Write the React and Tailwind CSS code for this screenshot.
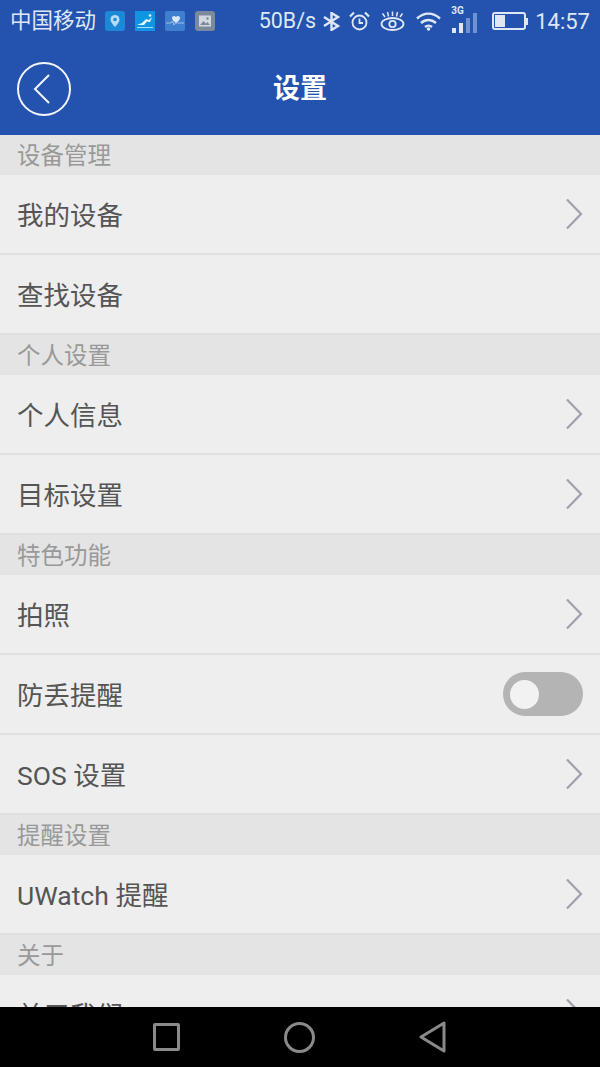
const FONT = "font-['Roboto','Noto_Sans_CJK_SC',sans-serif]"

const SECTIONS = [
  { title: '设备管理', rows: [{ label: '我的设备', arrow: true }, { label: '查找设备' }] },
  { title: '个人设置', rows: [{ label: '个人信息', arrow: true }, { label: '目标设置', arrow: true }] },
  {
    title: '特色功能',
    rows: [
      { label: '拍照', arrow: true },
      { label: '防丢提醒', toggle: true },
      { label: 'SOS 设置', arrow: true },
    ],
  },
  { title: '提醒设置', rows: [{ label: 'UWatch 提醒', arrow: true }] },
  { title: '关于', rows: [{ label: '关于我们', arrow: true }] },
]

function NotifyIcons() {
  return (
    <div className="flex items-center gap-[10px] ml-[9px]">
      <svg width="20" height="20" viewBox="0 0 20 20">
        <rect width="20" height="20" rx="3" fill="#1e88d8" />
        <path d="M10 16c-3-3.500-4.500-5.500-4.500-7.500a4.500 4.500 0 0 1 9 0C14.500 10.500 13 12.500 10 16z" fill="#b6dcf5" />
        <circle cx="10" cy="8.500" r="1.800" fill="#1e88d8" />
      </svg>
      <svg width="20" height="20" viewBox="0 0 20 20">
        <rect width="20" height="20" fill="#0f96e3" />
        <path d="M2 14l5-2 4-4 3 1 3-3-2 5-3-.5-3 3.500z" fill="#e8f6fd" />
        <circle cx="15" cy="4.500" r="1.300" fill="#e8f6fd" />
        <rect x="2" y="16" width="16" height="1" fill="#a8dcf7" />
      </svg>
      <svg width="20" height="20" viewBox="0 0 20 20">
        <rect width="20" height="20" rx="2" fill="#3f7fd0" />
        <path d="M11 12C8 10 7 8.500 7 6.800 7 5 9.500 4 11 6c1.500-2 4-1 4 .8C15 8.500 14 10 11 12z" fill="#dbe8f6" />
        <path d="M1 12h5l1.500-2 1.500 4 1.500-2H19" stroke="#a9c8ea" strokeWidth="0.900" fill="none" />
      </svg>
      <svg width="20" height="20" viewBox="0 0 20 20">
        <rect width="20" height="20" rx="3" fill="#7d8a9b" />
        <rect x="4" y="4.500" width="12" height="11" fill="#d3d8de" />
        <path d="M5 14l3.500-4 2.500 2.500 1.500-1.500 2.500 3z" fill="#7d8a9b" />
        <circle cx="12.500" cy="7.500" r="1.200" fill="#7d8a9b" />
      </svg>
    </div>
  )
}

function StatusIcons() {
  return (
    <div className="flex items-center">
      <svg width="19" height="19" viewBox="0 0 19 19" className="ml-[6px]" fill="none" stroke="#dfe7f5" strokeWidth="2.400">
        <path d="M2 5l14 9-6.500 4V1L16 5 2 14" />
      </svg>
      <svg width="21" height="20" viewBox="0 0 21 20" className="ml-[8px]" fill="none" stroke="#dfe7f5" strokeWidth="1.800">
        <circle cx="10.500" cy="11.500" r="7" />
        <path d="M10.500 7.500v4.500h3.500" />
        <path d="M1 5.500l4-4M20 5.500l-4-4" strokeWidth="2.200" />
      </svg>
      <svg width="27" height="20" viewBox="0 0 27 20" className="ml-[9px]" fill="none" stroke="#dfe7f5" strokeWidth="1.800">
        <ellipse cx="13.500" cy="13" rx="11" ry="6" />
        <circle cx="13.500" cy="13" r="3.200" />
        <path d="M6 6L3.500 2.500M13.500 5V.5M21 6l2.500-3.500M9.500 5.500L8.500 1M17.500 5.500L18.500 1" strokeWidth="1.500" />
      </svg>
      <svg width="27" height="20" viewBox="0 0 27 20" className="ml-[9px]" fill="none" stroke="#dfe7f5" strokeWidth="2.400">
        <path d="M2 7.500c7-6.500 16-6.500 23 0M6 12c4.500-4 10.500-4 15 0M10 16c2-1.800 5-1.800 7 0" />
        <circle cx="13.500" cy="18" r="1.800" fill="#dfe7f5" stroke="none" />
      </svg>
      <div className="relative w-[28px] h-[26px] ml-[8px] mt-[-2px]">
        <span className="absolute left-[1px] top-[-2px] text-[10px] leading-[12px] font-bold text-[#dfe7f5]">3G</span>
        <div className="absolute left-[2px] bottom-0 flex items-end gap-[3px]">
          <div className="w-[4px] h-[5px] bg-[#dfe7f5]" />
          <div className="w-[4px] h-[10px] bg-[#dfe7f5]" />
          <div className="w-[4px] h-[15px] bg-[#6f93cf]" />
          <div className="w-[4px] h-[20px] bg-[#6f93cf]" />
        </div>
      </div>
      <div className="flex items-center ml-[14px]">
        <div className="w-[34px] h-[18px] border-2 border-[#dfe7f5] rounded-[3px] p-[1px]">
          <div className="w-[10px] h-full bg-[#dfe7f5]" />
        </div>
        <div className="w-[2px] h-[7px] bg-[#dfe7f5]" />
      </div>
    </div>
  )
}

function Row({ label, arrow, toggle }) {
  return (
    <div className="h-[80px] flex items-center justify-between px-[17px] bg-[#eeeeee] border-b-2 border-[#e0e0e0]">
      <span className="text-[26.5px] text-[#555555] pt-[4px]">{label}</span>
      {arrow && (
        <svg width="17" height="32" viewBox="0 0 17 32" fill="none" stroke="#a0a0ac" strokeWidth="2.200" className="mt-[-1px]">
          <path d="M1 1.500L15 16 1 30.500" />
        </svg>
      )}
      {toggle && (
        <div className="w-[80px] h-[44px] rounded-full bg-[#b4b4b4] flex items-center pl-[7px]">
          <div className="w-[29px] h-[29px] rounded-full bg-[#f2f2f2]" />
        </div>
      )}
    </div>
  )
}

export default function App() {
  return (
    <div className={`h-[1067px] flex flex-col overflow-hidden bg-black ${FONT}`}>
      <div className="h-[135px] shrink-0 bg-[#2353ae]">
        <div className="h-[40px] flex items-center justify-between pl-[10px] pr-[10px] text-[#dfe7f5] pt-[2px]">
          <div className="flex items-center">
            <span className="text-[21.5px]">中国移动</span>
            <NotifyIcons />
          </div>
          <div className="flex items-center">
            <span className="text-[21.5px]">50B/s</span>
            <StatusIcons />
            <span className="text-[22px] ml-[7px]">14:57</span>
          </div>
        </div>
        <div className="h-[95px] relative flex items-center justify-center">
          <div className="absolute left-[17px] top-[22px] w-[54px] h-[54px] rounded-full border-2 border-[#f4f6fb] flex items-center justify-center">
            <svg width="26" height="34" viewBox="0 0 26 34" fill="none" stroke="#f4f6fb" strokeWidth="2" className="mr-[3px]">
              <path d="M19 3L5 17l14 14" />
            </svg>
          </div>
          <span className="text-[27px] font-bold text-white pt-[4px]">设置</span>
        </div>
      </div>

      <div className="flex-1 overflow-hidden">
        {SECTIONS.map(section => (
          <div key={section.title}>
            <div className="h-[40px] flex items-center pl-[17px] pt-[4px] bg-[#e4e4e4] text-[23.5px] text-[#999999]">
              {section.title}
            </div>
            {section.rows.map(row => (
              <Row key={row.label} {...row} />
            ))}
          </div>
        ))}
      </div>

      {/* Android nav keys */}
      <div className="h-[60px] shrink-0 bg-black flex items-center justify-center gap-[104px]">
        <div className="w-[27px] h-[28px] border-[3px] border-[#8a8a8a] rounded-[2px]" />
        <div className="w-[31px] h-[31px] border-[3px] border-[#8a8a8a] rounded-full" />
        <svg width="28" height="32" viewBox="0 0 28 32" fill="none" stroke="#8a8a8a" strokeWidth="3" strokeLinejoin="round">
          <path d="M25 2v28L2 16z" />
        </svg>
      </div>
    </div>
  )
}
